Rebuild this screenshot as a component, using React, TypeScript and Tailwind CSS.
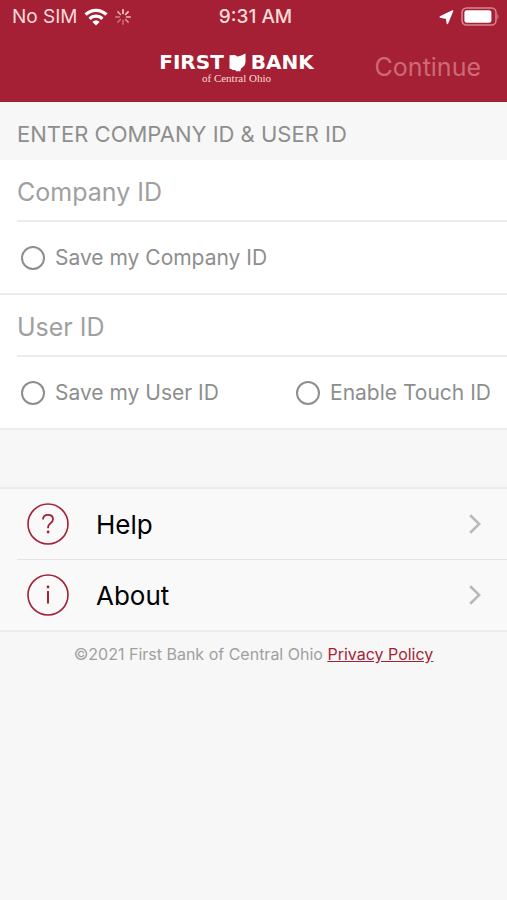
import type { ReactNode } from "react";

function WifiIcon() {
  return (
    <svg viewBox="0 0 24 18" className="h-[18px] w-6" fill="none" stroke="#fff" strokeWidth="3.2" aria-hidden="true">
      <path d="M1.6 6.6a14.8 14.8 0 0 1 20.8 0" />
      <path d="M5.6 10.8a9 9 0 0 1 12.8 0" />
      <path d="M12 17.4 8.4 13.9a5 5 0 0 1 7.2 0z" fill="#fff" stroke="none" />
    </svg>
  );
}

const spokes = [1, 0.95, 0.85, 0.6, 0.4, 0.4, 0.55, 0.75];

function SpinnerIcon() {
  return (
    <svg viewBox="0 0 18 18" className="size-[18px]" stroke="#fbdcd8" strokeWidth="1.6" strokeLinecap="round" aria-hidden="true">
      {spokes.map((opacity, i) => (
        <path key={i} d="M9 1.8v3.6" opacity={opacity} transform={`rotate(${i * 45} 9 9)`} />
      ))}
    </svg>
  );
}

function LocationIcon() {
  return (
    <svg viewBox="0 0 16 16" className="size-4" fill="#fff" stroke="#fff" strokeWidth="1.4" strokeLinejoin="round" aria-hidden="true">
      <path d="M13.6 2 8.4 14.6 7.6 9.4 1.2 8z" />
    </svg>
  );
}

function BatteryIcon() {
  return (
    <svg viewBox="0 0 38 20" className="h-5 w-[38px]" aria-hidden="true">
      <rect x="1" y="1" width="34" height="17" rx="4.5" fill="none" stroke="#d8868c" strokeWidth="1.5" />
      <rect x="3.4" y="3.2" width="27" height="12.6" rx="2.4" fill="#fff" />
      <path d="M36.4 7c1.4.6 1.4 4.6 0 5.2z" fill="#d8868c" />
    </svg>
  );
}

function OhioIcon() {
  return (
    <svg viewBox="0 0 17 19" className="h-[19px] w-[17px] shrink-0" fill="#fff" aria-hidden="true">
      <path d="M.5 2.2 6 2 8.4 3.4 11 3 16.5.4V9L15.8 12 13.4 14.6 12 15.6 11.2 18.4 9.4 18 8 18.4 6 17 3.8 17 2.2 16 .5 15.4z" />
    </svg>
  );
}

function Choice({ id, label }: { id: string; label: string }) {
  return (
    <label htmlFor={id} className="flex items-center gap-[10px] text-[21px] leading-7 text-[#8e8e8e]">
      <input
        id={id}
        type="checkbox"
        className="size-6 shrink-0 appearance-none rounded-full border-2 border-[#8e8e8e] bg-white checked:bg-[#a51f35]"
      />
      {label}
    </label>
  );
}

function Field({ id, label, children }: { id: string; label: string; children: ReactNode }) {
  return (
    <div className="border-b-2 border-[#ececec] bg-white">
      <div className="ml-[17px] border-b-2 border-[#ececec]">
        <input
          id={id}
          type="text"
          aria-label={label}
          placeholder={label}
          className="block h-[60px] w-full pt-1 text-[25px] text-black outline-none placeholder:text-[#a0a0a0]"
        />
      </div>
      <div className="flex h-[71px] items-center justify-between pr-4 pl-[21px]">{children}</div>
    </div>
  );
}

function MenuLink({ label, children }: { label: string; children: ReactNode }) {
  return (
    <a href="#" className="flex h-[70px] items-center pr-[26px] pl-[27px] text-[26px] text-black">
      <svg viewBox="0 0 42 42" className="mr-[27px] size-[42px]" fill="none" stroke="#a51f35" strokeWidth="1.6" aria-hidden="true">
        <circle cx="21" cy="21" r="20" />
        {children}
      </svg>
      <span className="grow">{label}</span>
      <svg viewBox="0 0 12 20" className="h-5 w-3" fill="none" stroke="#b9b9b9" strokeWidth="2.6" aria-hidden="true">
        <path d="m1.2 1.2 9 8.8-9 8.8" />
      </svg>
    </a>
  );
}

export default function App() {
  return (
    <div className="min-h-screen bg-[#f7f7f7] font-['Inter',sans-serif]">
      <header className="bg-[#a51f35]">
        <div className="grid grid-cols-[1fr_auto_1fr] items-center pr-2 pl-3 text-[19px] leading-[34px] text-[#fbdcd8]">
          <div className="flex items-center gap-[6px]">
            <span>No SIM</span>
            <WifiIcon />
            <SpinnerIcon />
          </div>
          <span className="font-medium">9:31 AM</span>
          <div className="flex items-center justify-end gap-[6px]">
            <LocationIcon />
            <BatteryIcon />
          </div>
        </div>
        <div className="grid h-[68px] grid-cols-[1fr_auto_1fr] items-center pr-[26px]">
          <div className="col-start-2 mr-2 flex flex-col items-center">
            <div className="flex items-center gap-[5px] font-['DejaVu_Sans',sans-serif] text-[20px] leading-[18px] font-bold text-white">
              <span>FIRST</span>
              <OhioIcon />
              <span>BANK</span>
            </div>
            <span className="font-['Liberation_Serif',serif] text-[11px] leading-3 text-[#fbdcd8]">of Central Ohio</span>
          </div>
          <button type="button" className="justify-self-end text-[25px] text-[#cc6b76]">
            Continue
          </button>
        </div>
      </header>

      <main>
        <form>
          <h1 className="px-[17px] pt-[18px] pb-3 text-[22px] leading-7 text-[#8e8e8e]">ENTER COMPANY ID &amp; USER ID</h1>
          <Field id="company-id" label="Company ID">
            <Choice id="save-company" label="Save my Company ID" />
          </Field>
          <Field id="user-id" label="User ID">
            <Choice id="save-user" label="Save my User ID" />
            <Choice id="touch-id" label="Enable Touch ID" />
          </Field>
        </form>

        <nav className="mt-[57px] border-y-2 border-[#ececec] bg-[#f9f9f9]">
          <MenuLink label="Help">
            <path d="M16 16.5c0-3 2-4.7 5-4.7s5 1.8 5 4.5c0 2-1.1 3.1-2.7 4.1-1.6 1.1-2.2 2-2.2 3.6v1.2" strokeWidth="1.8" />
            <circle cx="21.1" cy="29" r="1.4" fill="#a51f35" stroke="none" />
          </MenuLink>
          <div className="ml-[17px] h-px bg-[#e3e3e3]" />
          <MenuLink label="About">
            <path d="M21 17v12.5" strokeWidth="2" />
            <circle cx="21" cy="13" r="1.4" fill="#a51f35" stroke="none" />
          </MenuLink>
        </nav>
      </main>

      <footer className="pt-[10px] text-center text-[16px] leading-6 text-[#a0a0a0]">
        ©2021 First Bank of Central Ohio{" "}
        <a href="#" className="text-[#a51f35] underline">
          Privacy Policy
        </a>
      </footer>
    </div>
  );
}
